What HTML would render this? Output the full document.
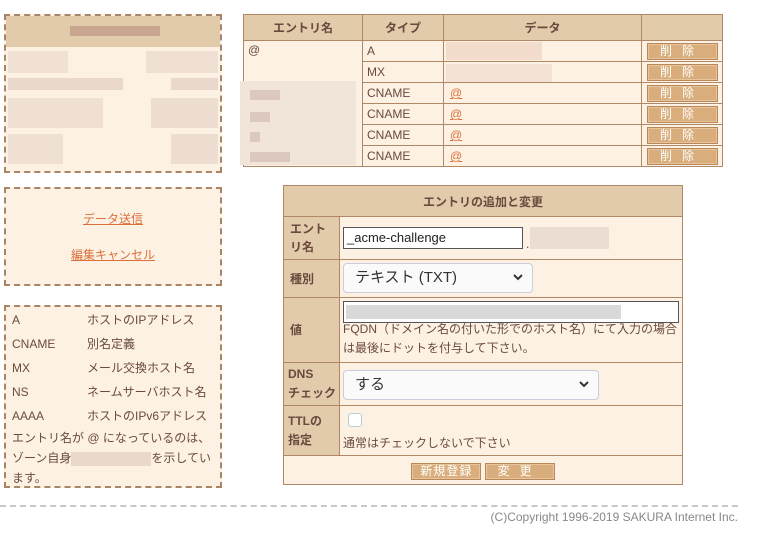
<!DOCTYPE html>
<html><head><meta charset="utf-8"><style>
*{box-sizing:border-box;margin:0;padding:0}
body{width:766px;height:557px;background:#fff;font-family:"Liberation Sans","Noto Sans CJK JP",sans-serif;color:#6a4a3e;font-size:12px;position:relative;overflow:hidden}
.abs{position:absolute}
.dbox{position:absolute;border:2px dashed #a88566;background:#fdf1e4}
.bl{position:absolute;background:#ead8cc}
table{border-collapse:collapse;position:absolute}
td,th{border:1px solid #b08866}
th{background:#e2cbab;font-weight:bold;font-size:12px;color:#6a4a3e}
.btn{display:inline-block;background:#d9ae7c;border:1px solid #b9885a;color:#fff;font-size:12px;text-align:center;height:17px;line-height:15px;letter-spacing:10px;box-shadow:inset 0 0 0 1px #e6c59c}
a{color:#d9703a}
.lab{background:#e2cbab;font-weight:bold;font-size:12px;padding-left:6px;line-height:22px}
.sel{position:absolute;background:#fafafa;border:1px solid #ccd;border-radius:4px;font-size:15px;color:#333;padding-left:11px}
</style></head><body>
<div class="dbox" style="left:4px;top:14px;width:218px;height:159px;background:#fdf1e4">
 <div class="abs" style="left:0;top:0;width:214px;height:31px;background:#e2cbab"></div>
 <div class="abs" style="left:64px;top:10px;width:90px;height:10px;background:#c9a690"></div>
 <div class="bl" style="left:2px;top:35px;width:60px;height:22px;opacity:.6"></div>
 <div class="bl" style="left:140px;top:35px;width:72px;height:22px;opacity:.7"></div>
 <div class="bl" style="left:2px;top:62px;width:115px;height:12px"></div>
 <div class="bl" style="left:165px;top:62px;width:47px;height:12px"></div>
 <div class="bl" style="left:2px;top:82px;width:95px;height:30px;opacity:.7"></div>
 <div class="bl" style="left:145px;top:82px;width:67px;height:30px;opacity:.8"></div>
 <div class="bl" style="left:2px;top:118px;width:55px;height:30px;opacity:.7"></div>
 <div class="bl" style="left:165px;top:118px;width:47px;height:30px;opacity:.8"></div>
</div>
<div class="dbox" style="left:4px;top:187px;width:218px;height:99px;text-align:center;font-size:12px;line-height:18px">
 <div style="margin-top:21px"><a href="#">データ送信</a></div>
 <div style="margin-top:18px"><a href="#">編集キャンセル</a></div>
</div>
<div class="dbox" style="left:4px;top:305px;width:218px;height:183px;font-size:12px;line-height:24px;padding:1px 0 0 6px;white-space:nowrap">
 <div><span style="display:inline-block;width:75px">A</span>ホストのIPアドレス</div>
 <div><span style="display:inline-block;width:75px">CNAME</span>別名定義</div>
 <div><span style="display:inline-block;width:75px">MX</span>メール交換ホスト名</div>
 <div><span style="display:inline-block;width:75px">NS</span>ネームサーバホスト名</div>
 <div><span style="display:inline-block;width:75px">AAAA</span>ホストのIPv6アドレス</div>
 <div style="line-height:20px;margin-top:0px">エントリ名が @ になっているのは、<br>ゾーン自身<span style="display:inline-block;width:80px;height:14px;background:#ead8cc;vertical-align:middle"></span>を示してい<br>ます。</div>
</div>
<table style="left:243px;top:14px;width:480px;background:#fdf1e4;font-size:12px">
<tr style="height:26px"><th style="width:119px">エントリ名</th><th style="width:81px">タイプ</th><th style="width:198px">データ</th><th></th></tr>
<tr style="height:21px"><td rowspan="2" style="vertical-align:top;padding:2px 4px;border-bottom:none">@</td><td style="padding-left:4px">A</td><td></td><td style="text-align:center"><span class="btn" style="width:71px">削除</span></td></tr>
<tr style="height:21px"><td style="padding-left:4px">MX</td><td></td><td style="text-align:center"><span class="btn" style="width:71px">削除</span></td></tr>
<tr style="height:21px"><td style="border-top:none;border-bottom:none"></td><td style="padding-left:4px">CNAME</td><td style="padding-left:6px"><a href="#">@</a></td><td style="text-align:center"><span class="btn" style="width:71px">削除</span></td></tr>
<tr style="height:21px"><td style="border-top:none;border-bottom:none"></td><td style="padding-left:4px">CNAME</td><td style="padding-left:6px"><a href="#">@</a></td><td style="text-align:center"><span class="btn" style="width:71px">削除</span></td></tr>
<tr style="height:21px"><td style="border-top:none;border-bottom:none"></td><td style="padding-left:4px">CNAME</td><td style="padding-left:6px"><a href="#">@</a></td><td style="text-align:center"><span class="btn" style="width:71px">削除</span></td></tr>
<tr style="height:21px"><td style="border-top:none"></td><td style="padding-left:4px">CNAME</td><td style="padding-left:6px"><a href="#">@</a></td><td style="text-align:center"><span class="btn" style="width:71px">削除</span></td></tr>
</table>
<div class="abs" style="left:446px;top:42px;width:96px;height:18px;background:#f3dccb"></div>
<div class="abs" style="left:446px;top:64px;width:106px;height:18px;background:#f3e2d5"></div>
<div class="abs" style="left:240px;top:81px;width:116px;height:84px;background:#f1e4d8"></div>
<div class="abs" style="left:250px;top:90px;width:30px;height:10px;background:#dcc8bf"></div>
<div class="abs" style="left:250px;top:112px;width:20px;height:10px;background:#dcc8bf"></div>
<div class="abs" style="left:250px;top:132px;width:10px;height:10px;background:#dcc8bf"></div>
<div class="abs" style="left:250px;top:152px;width:40px;height:10px;background:#dcc8bf"></div>
<table style="left:283px;top:185px;width:400px;background:#fdf1e4">
<tr style="height:31px"><th colspan="2">エントリの追加と変更</th></tr>
<tr style="height:43px"><td class="lab" style="width:56px;line-height:18px">エント<br>リ名</td><td></td></tr>
<tr style="height:38px"><td class="lab">種別</td><td></td></tr>
<tr style="height:65px"><td class="lab">値</td><td style="vertical-align:bottom;padding:0 0 4px 3px;font-size:12px;line-height:19px;white-space:nowrap">FQDN（ドメイン名の付いた形でのホスト名）にて入力の場合<br>は最後にドットを付与して下さい。</td></tr>
<tr style="height:43px"><td class="lab" style="line-height:19px;padding-left:4px">DNS<br>チェック</td><td></td></tr>
<tr style="height:50px"><td class="lab" style="line-height:19px;padding-left:4px">TTLの<br>指定</td><td style="vertical-align:bottom;padding:0 0 4px 3px">通常はチェックしないで下さい</td></tr>
<tr style="height:29px"><td colspan="2" style="text-align:center;padding-top:2px"><span class="btn" style="width:70px;letter-spacing:1px">新規登録</span> <span class="btn" style="width:70px">変更</span></td></tr>
</table>
<div class="abs" style="left:343px;top:227px;width:180px;height:22px;background:#fff;border:1px solid #555;font-size:13px;color:#222;padding:2px 3px">_acme-challenge</div>
<div class="abs" style="left:526px;top:237px;font-size:12px">.</div>
<div class="abs" style="left:530px;top:227px;width:79px;height:22px;background:#ecddd2"></div>
<div class="sel" style="left:343px;top:263px;width:190px;height:30px;line-height:28px">テキスト (TXT)</div>
<div class="abs" style="left:343px;top:301px;width:336px;height:22px;background:#fff;border:1px solid #555"><div style="margin:3px 0 0 2px;width:275px;height:14px;background:#d9d9d9"></div></div>
<div class="sel" style="left:343px;top:370px;width:256px;height:30px;line-height:28px">する</div>
<div class="abs" style="left:348px;top:413px;width:14px;height:14px;border:1px solid #bcc;border-radius:3px;background:#fff"></div>
<svg class="abs" style="left:512px;top:272px" width="12" height="10"><path d="M2 3 L6 7 L10 3" stroke="#333" stroke-width="2" fill="none"/></svg>
<svg class="abs" style="left:578px;top:379px" width="12" height="10"><path d="M2 3 L6 7 L10 3" stroke="#333" stroke-width="2" fill="none"/></svg>
<div class="abs" style="left:0;top:505px;width:738px;border-top:2px dashed #c8c8c8"></div>
<div class="abs" style="right:28px;top:510px;font-size:12px;color:#888">(C)Copyright 1996-2019 SAKURA Internet Inc.</div>
</body></html>
